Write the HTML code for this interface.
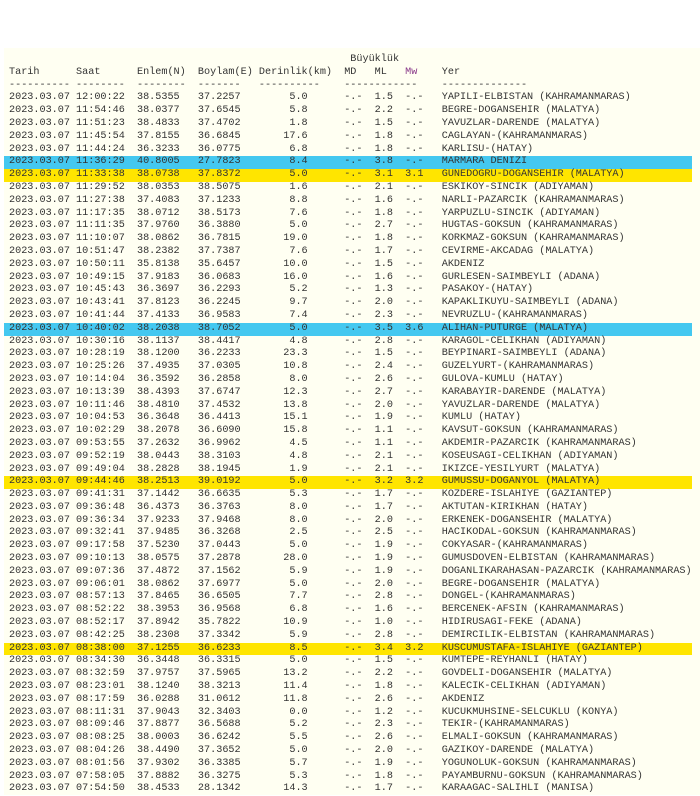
<!DOCTYPE html>
<html><head><meta charset="utf-8">
<style>
html,body{margin:0;padding:0;background:#fff;width:700px;height:795px;overflow:hidden}
#bg{position:absolute;left:4px;top:48px;width:696px;height:747px;background:#fffff2}
pre{position:absolute;left:0;top:54px;margin:0;font-family:"Liberation Mono",monospace;font-size:10.17px;line-height:12.8px;color:#333;white-space:pre}
pre div{height:12.8px;padding-left:9px;margin-left:0}
.b{background:#44c8f0;margin-left:4px!important;padding-left:5px!important;width:683px}
.y{background:#ffe500;margin-left:4px!important;padding-left:5px!important;width:683px}
.mw{color:#8a3a8a}
</style></head><body>
<div id="bg"></div>
<pre><div>                                                        Büyüklük</div><div>Tarih      Saat      Enlem(N)  Boylam(E) Derinlik(km)  MD   ML   <span class="mw">Mw</span>    Yer</div><div>---------- --------  --------  -------   ----------    ------------    --------------</div><div>2023.03.07 12:00:22  38.5355   37.2257        5.0      -.-  1.5  -.-   YAPILI-ELBISTAN (KAHRAMANMARAS)</div><div>2023.03.07 11:54:46  38.0377   37.6545        5.8      -.-  2.2  -.-   BEGRE-DOGANSEHIR (MALATYA)</div><div>2023.03.07 11:51:23  38.4833   37.4702        1.8      -.-  1.5  -.-   YAVUZLAR-DARENDE (MALATYA)</div><div>2023.03.07 11:45:54  37.8155   36.6845       17.6      -.-  1.8  -.-   CAGLAYAN-(KAHRAMANMARAS)</div><div>2023.03.07 11:44:24  36.3233   36.0775        6.8      -.-  1.8  -.-   KARLISU-(HATAY)</div><div class="b">2023.03.07 11:36:29  40.8005   27.7823        8.4      -.-  3.8  -.-   MARMARA DENIZI</div><div class="y">2023.03.07 11:33:38  38.0738   37.8372        5.0      -.-  3.1  3.1   GUNEDOGRU-DOGANSEHIR (MALATYA)</div><div>2023.03.07 11:29:52  38.0353   38.5075        1.6      -.-  2.1  -.-   ESKIKOY-SINCIK (ADIYAMAN)</div><div>2023.03.07 11:27:38  37.4083   37.1233        8.8      -.-  1.6  -.-   NARLI-PAZARCIK (KAHRAMANMARAS)</div><div>2023.03.07 11:17:35  38.0712   38.5173        7.6      -.-  1.8  -.-   YARPUZLU-SINCIK (ADIYAMAN)</div><div>2023.03.07 11:11:35  37.9760   36.3880        5.0      -.-  2.7  -.-   HUGTAS-GOKSUN (KAHRAMANMARAS)</div><div>2023.03.07 11:10:07  38.0862   36.7815       19.0      -.-  1.8  -.-   KORKMAZ-GOKSUN (KAHRAMANMARAS)</div><div>2023.03.07 10:51:47  38.2382   37.7387        7.6      -.-  1.7  -.-   CEVIRME-AKCADAG (MALATYA)</div><div>2023.03.07 10:50:11  35.8138   35.6457       10.0      -.-  1.5  -.-   AKDENIZ</div><div>2023.03.07 10:49:15  37.9183   36.0683       16.0      -.-  1.6  -.-   GURLESEN-SAIMBEYLI (ADANA)</div><div>2023.03.07 10:45:43  36.3697   36.2293        5.2      -.-  1.3  -.-   PASAKOY-(HATAY)</div><div>2023.03.07 10:43:41  37.8123   36.2245        9.7      -.-  2.0  -.-   KAPAKLIKUYU-SAIMBEYLI (ADANA)</div><div>2023.03.07 10:41:44  37.4133   36.9583        7.4      -.-  2.3  -.-   NEVRUZLU-(KAHRAMANMARAS)</div><div class="b">2023.03.07 10:40:02  38.2038   38.7052        5.0      -.-  3.5  3.6   ALIHAN-PUTURGE (MALATYA)</div><div>2023.03.07 10:30:16  38.1137   38.4417        4.8      -.-  2.8  -.-   KARAGOL-CELIKHAN (ADIYAMAN)</div><div>2023.03.07 10:28:19  38.1200   36.2233       23.3      -.-  1.5  -.-   BEYPINARI-SAIMBEYLI (ADANA)</div><div>2023.03.07 10:25:26  37.4935   37.0305       10.8      -.-  2.4  -.-   GUZELYURT-(KAHRAMANMARAS)</div><div>2023.03.07 10:14:04  36.3592   36.2858        8.0      -.-  2.6  -.-   GULOVA-KUMLU (HATAY)</div><div>2023.03.07 10:13:39  38.4393   37.6747       12.3      -.-  2.7  -.-   KARABAYIR-DARENDE (MALATYA)</div><div>2023.03.07 10:11:46  38.4810   37.4532       13.8      -.-  2.0  -.-   YAVUZLAR-DARENDE (MALATYA)</div><div>2023.03.07 10:04:53  36.3648   36.4413       15.1      -.-  1.9  -.-   KUMLU (HATAY)</div><div>2023.03.07 10:02:29  38.2078   36.6090       15.8      -.-  1.1  -.-   KAVSUT-GOKSUN (KAHRAMANMARAS)</div><div>2023.03.07 09:53:55  37.2632   36.9962        4.5      -.-  1.1  -.-   AKDEMIR-PAZARCIK (KAHRAMANMARAS)</div><div>2023.03.07 09:52:19  38.0443   38.3103        4.8      -.-  2.1  -.-   KOSEUSAGI-CELIKHAN (ADIYAMAN)</div><div>2023.03.07 09:49:04  38.2828   38.1945        1.9      -.-  2.1  -.-   IKIZCE-YESILYURT (MALATYA)</div><div class="y">2023.03.07 09:44:46  38.2513   39.0192        5.0      -.-  3.2  3.2   GUMUSSU-DOGANYOL (MALATYA)</div><div>2023.03.07 09:41:31  37.1442   36.6635        5.3      -.-  1.7  -.-   KOZDERE-ISLAHIYE (GAZIANTEP)</div><div>2023.03.07 09:36:48  36.4373   36.3763        8.0      -.-  1.7  -.-   AKTUTAN-KIRIKHAN (HATAY)</div><div>2023.03.07 09:36:34  37.9233   37.9468        8.0      -.-  2.0  -.-   ERKENEK-DOGANSEHIR (MALATYA)</div><div>2023.03.07 09:32:41  37.9485   36.3268        2.5      -.-  2.5  -.-   HACIKODAL-GOKSUN (KAHRAMANMARAS)</div><div>2023.03.07 09:17:58  37.5230   37.0443        5.0      -.-  1.9  -.-   COKYASAR-(KAHRAMANMARAS)</div><div>2023.03.07 09:10:13  38.0575   37.2878       28.0      -.-  1.9  -.-   GUMUSDOVEN-ELBISTAN (KAHRAMANMARAS)</div><div>2023.03.07 09:07:36  37.4872   37.1562        5.9      -.-  1.9  -.-   DOGANLIKARAHASAN-PAZARCIK (KAHRAMANMARAS)</div><div>2023.03.07 09:06:01  38.0862   37.6977        5.0      -.-  2.0  -.-   BEGRE-DOGANSEHIR (MALATYA)</div><div>2023.03.07 08:57:13  37.8465   36.6505        7.7      -.-  2.8  -.-   DONGEL-(KAHRAMANMARAS)</div><div>2023.03.07 08:52:22  38.3953   36.9568        6.8      -.-  1.6  -.-   BERCENEK-AFSIN (KAHRAMANMARAS)</div><div>2023.03.07 08:52:17  37.8942   35.7822       10.9      -.-  1.0  -.-   HIDIRUSAGI-FEKE (ADANA)</div><div>2023.03.07 08:42:25  38.2308   37.3342        5.9      -.-  2.8  -.-   DEMIRCILIK-ELBISTAN (KAHRAMANMARAS)</div><div class="y">2023.03.07 08:38:00  37.1255   36.6233        8.5      -.-  3.4  3.2   KUSCUMUSTAFA-ISLAHIYE (GAZIANTEP)</div><div>2023.03.07 08:34:30  36.3448   36.3315        5.0      -.-  1.5  -.-   KUMTEPE-REYHANLI (HATAY)</div><div>2023.03.07 08:32:59  37.9757   37.5965       13.2      -.-  2.2  -.-   GOVDELI-DOGANSEHIR (MALATYA)</div><div>2023.03.07 08:23:01  38.1240   38.3213       11.4      -.-  1.8  -.-   KALECIK-CELIKHAN (ADIYAMAN)</div><div>2023.03.07 08:17:59  36.0288   31.0612       11.8      -.-  2.6  -.-   AKDENIZ</div><div>2023.03.07 08:11:31  37.9043   32.3403        0.0      -.-  1.2  -.-   KUCUKMUHSINE-SELCUKLU (KONYA)</div><div>2023.03.07 08:09:46  37.8877   36.5688        5.2      -.-  2.3  -.-   TEKIR-(KAHRAMANMARAS)</div><div>2023.03.07 08:08:25  38.0003   36.6242        5.5      -.-  2.6  -.-   ELMALI-GOKSUN (KAHRAMANMARAS)</div><div>2023.03.07 08:04:26  38.4490   37.3652        5.0      -.-  2.0  -.-   GAZIKOY-DARENDE (MALATYA)</div><div>2023.03.07 08:01:56  37.9302   36.3385        5.7      -.-  1.9  -.-   YOGUNOLUK-GOKSUN (KAHRAMANMARAS)</div><div>2023.03.07 07:58:05  37.8882   36.3275        5.3      -.-  1.8  -.-   PAYAMBURNU-GOKSUN (KAHRAMANMARAS)</div><div>2023.03.07 07:54:50  38.4533   28.1342       14.3      -.-  1.7  -.-   KARAAGAC-SALIHLI (MANISA)</div></pre>
</body></html>
